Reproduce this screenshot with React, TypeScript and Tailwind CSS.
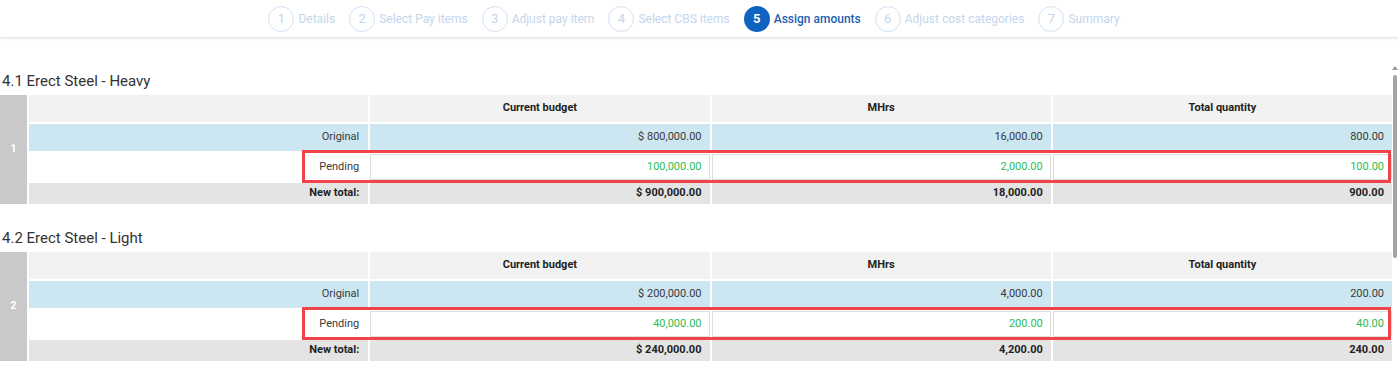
import React from "react";

interface Step {
  n: number;
  label: string;
}

interface Section {
  idx: number;
  title: string;
  original: string[];
  pending: string[];
  total: string[];
}

const steps: Step[] = [
  { n: 1, label: "Details" },
  { n: 2, label: "Select Pay items" },
  { n: 3, label: "Adjust pay item" },
  { n: 4, label: "Select CBS items" },
  { n: 5, label: "Assign amounts" },
  { n: 6, label: "Adjust cost categories" },
  { n: 7, label: "Summary" },
];

const ACTIVE = 5;

const sections: Section[] = [
  {
    idx: 1,
    title: "4.1 Erect Steel - Heavy",
    original: ["$ 800,000.00", "16,000.00", "800.00"],
    pending: ["100,000.00", "2,000.00", "100.00"],
    total: ["$ 900,000.00", "18,000.00", "900.00"],
  },
  {
    idx: 2,
    title: "4.2 Erect Steel - Light",
    original: ["$ 200,000.00", "4,000.00", "200.00"],
    pending: ["40,000.00", "200.00", "40.00"],
    total: ["$ 240,000.00", "4,200.00", "240.00"],
  },
];

const columns = ["Current budget", "MHrs", "Total quantity"];

const Stepper: React.FC = () => (
  <div className="h-[38px] bg-white border-b border-[#e6e6e6] shadow-[0_1px_3px_rgba(0,0,0,0.08)] flex items-center justify-center gap-[14px] pr-[10px]">
    {steps.map((s) => {
      const active = s.n === ACTIVE;
      return (
        <div key={s.n} className="flex items-center gap-[4px]">
          <div
            className={
              active
                ? "w-[26px] h-[26px] rounded-full bg-[#0f62c0] text-white font-bold text-[13px] flex items-center justify-center"
                : "w-[26px] h-[26px] rounded-full border border-[#d3e2f3] text-[#c3d6ed] text-[13px] flex items-center justify-center"
            }
          >
            {s.n}
          </div>
          <span
            className={
              active
                ? "text-[12px] font-medium text-[#1b5fb0]"
                : "text-[12px] text-[#c3d6ed]"
            }
          >
            {s.label}
          </span>
        </div>
      );
    })}
  </div>
);

const AmountTable: React.FC<{ section: Section }> = ({ section }) => (
  <div className="mb-[20px]">
    <h2 className="text-[15px] text-[#333] leading-[28px] pl-[2px]">
      {section.title}
    </h2>
    <div className="relative grid grid-cols-[27px_repeat(4,minmax(0,1fr))] grid-rows-[27px_27px_28px_21px] gap-[2px] text-[11px] text-[#3a3a3a]">
      <div className="row-span-4 bg-[#c9c9c9] flex items-center justify-center text-white font-bold">
        {section.idx}
      </div>

      {/* header */}
      <div className="bg-[#f2f2f2]" />
      {columns.map((c) => (
        <div
          key={c}
          className="bg-[#f2f2f2] flex items-center justify-center font-bold text-[#222]"
        >
          {c}
        </div>
      ))}

      {/* original */}
      <div className="bg-[#cce6f2] flex items-center justify-end pr-[9px]">
        Original
      </div>
      {section.original.map((v, i) => (
        <div
          key={i}
          className="bg-[#cce6f2] flex items-center justify-end pr-[8px]"
        >
          {v}
        </div>
      ))}

      {/* pending */}
      <div className="bg-white flex items-center justify-end pr-[9px]">
        Pending
      </div>
      {section.pending.map((v, i) => (
        <div key={i} className="bg-white py-[1px]">
          <div className="h-full border border-[#dedede] flex items-center justify-end pr-[7px] text-[#2bbd55]">
            {v}
          </div>
        </div>
      ))}

      {/* new total */}
      <div className="bg-[#e4e4e4] flex items-center justify-end pr-[9px] font-bold text-[#222]">
        New total:
      </div>
      {section.total.map((v, i) => (
        <div
          key={i}
          className="bg-[#e4e4e4] flex items-center justify-end pr-[8px] font-bold text-[#222]"
        >
          {v}
        </div>
      ))}

      {/* highlight */}
      <div className="absolute left-[302px] right-[1px] top-[55px] h-[33px] border-[3px] border-[#f0444a] pointer-events-none" />
    </div>
  </div>
);

export default function App() {
  return (
    <div className="w-[1398px] h-[367px] overflow-hidden bg-white font-['Roboto',sans-serif]">
      <Stepper />
      <div className="flex">
        <div className="w-[1392px] pt-[29px]">
          {sections.map((s) => (
            <AmountTable key={s.idx} section={s} />
          ))}
        </div>
        <div className="flex-1 flex flex-col items-center pt-[28px]">
          <div className="w-0 h-0 border-l-[3px] border-r-[3px] border-b-[4px] border-l-transparent border-r-transparent border-b-[#9a9a9a]" />
          <div className="mt-[5px] w-[4px] h-[183px] rounded-full bg-[#a3a3a3]" />
        </div>
      </div>
    </div>
  );
}
